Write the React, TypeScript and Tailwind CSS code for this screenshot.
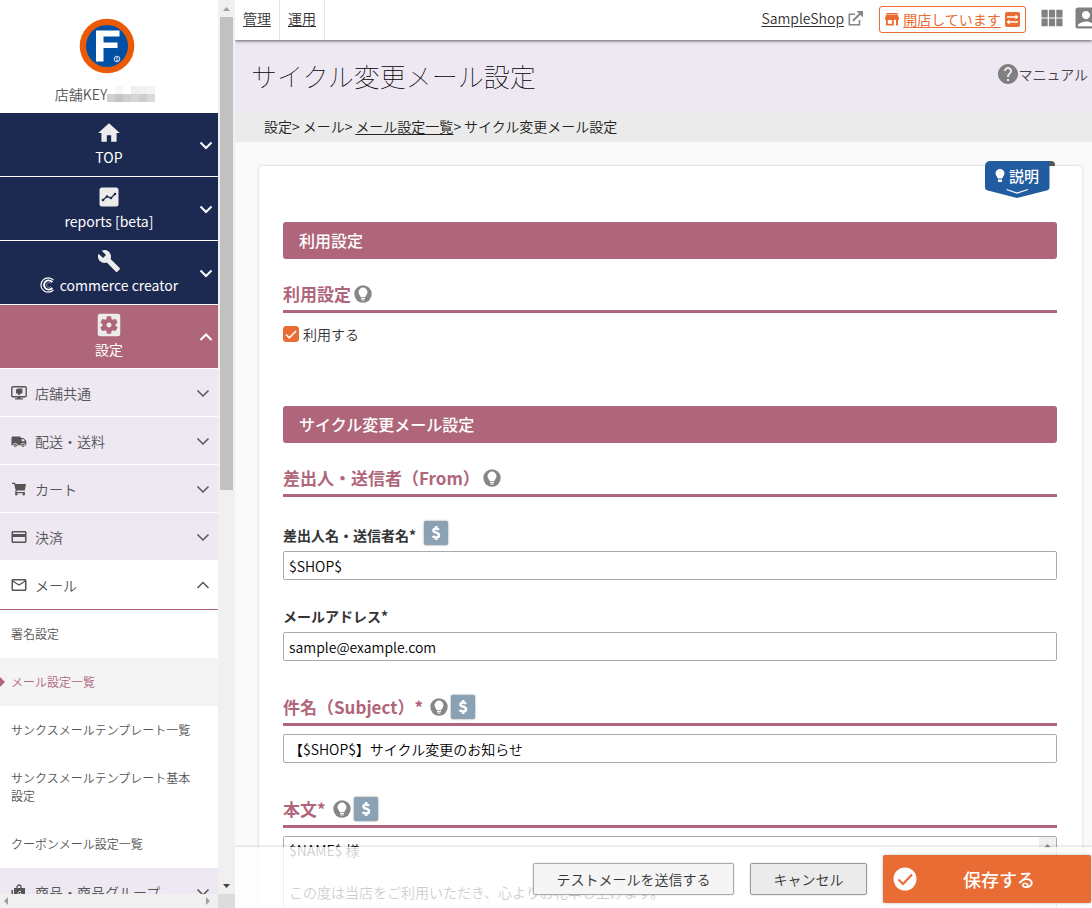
import React from "react";
import {
  MdAccountBox,
  MdBuild,
  MdCreditCard,
  MdHelp,
  MdHome,
  MdMailOutline,
  MdSettingsApplications,
  MdViewModule,
} from "react-icons/md";

function Chevron({ up = false, bold = false }: { up?: boolean; bold?: boolean }) {
  return (
    <svg viewBox="0 0 14 14" className="h-3.5 w-3.5" fill="none" stroke="currentColor" strokeWidth={bold ? 2 : 1.5} aria-hidden="true">
      <path d={up ? "M1.5 10 7 4.5 12.5 10" : "M1.5 4.5 7 10l5.500-5.500"} />
    </svg>
  );
}

function ReportIcon() {
  return (
    <svg viewBox="0 0 20 20" className="h-5 w-5" aria-hidden="true">
      <rect x="0.500" y="0.500" width="19" height="19" rx="2.500" fill="#ececec" />
      <path d="M4 13 8 9.500 12 11 16 7" fill="none" stroke="#1c2951" strokeWidth="1.200" />
      <g fill="#1c2951">
        <circle cx="4" cy="13" r="1.300" />
        <circle cx="8" cy="9.500" r="1.300" />
        <circle cx="12" cy="11" r="1.300" />
        <circle cx="16" cy="7" r="1.300" />
      </g>
    </svg>
  );
}

function CreatorMark() {
  return (
    <svg viewBox="0 0 16 16" className="h-4 w-4" fill="none" stroke="#fff" aria-hidden="true">
      <path d="M13.500 3.200A7.200 7.200 0 1 0 13.500 12.800" strokeWidth="1.200" />
      <path d="M12.300 5.200A4.600 4.600 0 1 0 12.300 10.800" strokeWidth="1.900" />
      <path d="M11 6.800A2.400 2.400 0 1 0 11 9.200" strokeWidth="0.700" opacity="0.600" />
    </svg>
  );
}

function MonitorIcon() {
  return (
    <svg viewBox="0 0 16 16" className="h-4 w-4" aria-hidden="true">
      <rect x="0.800" y="1.700" width="14.400" height="10" rx="1" fill="none" stroke="currentColor" strokeWidth="1.400" />
      <path d="M6.500 11.700h3V13.200H12V14.600H4V13.200h2.500zM5 4.500 7.200 3.600h4.200v5H9.800L8.400 10H7V8.400H5z" fill="currentColor" />
    </svg>
  );
}

function TruckIcon() {
  return (
    <svg viewBox="0 0 16 16" className="h-4 w-4" aria-hidden="true">
      <path d="M1.500 3.500H9a.8.8 0 0 1 .8.800V5h2.700L15.300 8v4.200H.5V4.500a1 1 0 0 1 1-1z" fill="currentColor" />
      <path d="M10.800 6.100v2.100h3.200l-1.900-2.100z" fill="#eee8f3" />
      <g fill="currentColor" stroke="#eee8f3" strokeWidth="0.800">
        <circle cx="4.300" cy="12.300" r="2" />
        <circle cx="12" cy="12.300" r="2" />
      </g>
      <g fill="#eee8f3">
        <circle cx="4.300" cy="12.300" r="0.600" />
        <circle cx="12" cy="12.300" r="0.600" />
      </g>
    </svg>
  );
}

function CartIcon() {
  return (
    <svg viewBox="0 0 16 16" className="h-4 w-4" fill="currentColor" aria-hidden="true">
      <path d="M1 1.800h3L4.600 3H15l-1.200 6.500H5.800L5.500 11H14v1.200H4L4.600 9.300 3.200 3H1z" />
      <circle cx="5.300" cy="13.300" r="1.200" />
      <circle cx="12.800" cy="13.300" r="1.200" />
    </svg>
  );
}

function BagIcon() {
  return (
    <svg viewBox="0 0 16 16" className="h-4 w-4" aria-hidden="true">
      <path d="M6 4V3a2 2 0 0 1 4 0v1" fill="none" stroke="currentColor" strokeWidth="1.300" />
      <path d="M3 4h11v11H3zM.5 6H2v9H.5z" fill="currentColor" />
      <path d="M10 7.500a2 2 0 1 0 .2 3.500V9.500H9" fill="none" stroke="#eee8f3" />
    </svg>
  );
}

function ExternalIcon() {
  return (
    <svg viewBox="0 0 15 15" className="h-[15px] w-[15px]" fill="none" stroke="#868686" strokeWidth="1.600" aria-hidden="true">
      <path d="M7 3.200H1.300V13.700H11.500V9" />
      <path d="M5 9.800 12 2.800" strokeWidth="2" />
      <path d="M8.500 0H15V6.500L12.800 4.300 10.700 2.200z" fill="#868686" stroke="none" />
    </svg>
  );
}

function StoreIcon() {
  return (
    <svg viewBox="0 0 14 13" className="h-[13px] w-3.5" fill="#e86c33" aria-hidden="true">
      <path d="M1.300 0h11.400v1.400H1.300z" />
      <path fillRule="evenodd" d="M1.200 1.800h11.600L14 5.300V6.800H13V12.500H11V6.800H8.800V12.500H1V6.800H0V5.300zM2.800 7v3.800h4.200V7z" />
    </svg>
  );
}

function BulbIcon() {
  return (
    <svg viewBox="0 0 18 18" className="h-[18px] w-[18px]" aria-hidden="true">
      <circle cx="9" cy="9" r="8.700" fill="#868686" />
      <path d="M9 2.600A4.500 4.500 0 0 0 4.500 7c0 2.200 1.700 3.300 2.300 5.200h4.400c.6-1.900 2.300-3 2.300-5.200A4.500 4.500 0 0 0 9 2.600z" fill="#fff" />
      <path d="M7 13h4v.9H7zM7.400 14.400h3.200v1H7.400z" fill="#fff" />
    </svg>
  );
}

function SwapIcon() {
  return (
    <svg viewBox="0 0 15 15" className="h-[15px] w-[15px]" aria-hidden="true">
      <rect width="15" height="15" rx="2" fill="#e86c33" />
      <path d="M2 5H11M4 10h9" stroke="#fff" strokeWidth="1.500" />
      <path d="M10.500 2.500 13.500 5 10.500 7.500zM4.500 7.500 1.500 10l3 2.500z" fill="#fff" />
    </svg>
  );
}

function HelpTip() {
  return (
    <button type="button" aria-label="ヘルプ" className="block">
      <BulbIcon />
    </button>
  );
}

function VariableButton() {
  return (
    <button
      type="button"
      aria-label="変数を挿入"
      className="flex h-6 w-6 items-center justify-center rounded-[2px] bg-[#8ba2b5] text-white shadow-[0_0_2px_rgba(0,0,0,0.5)]"
    >
      <svg viewBox="0 0 12 16" className="h-4 w-3" fill="none" stroke="currentColor" strokeWidth="2.500" aria-hidden="true">
        <path d="M8.800 5C8.200 4 7.200 3.500 6.200 3.500c-1.700 0-2.700.8-2.700 1.900 0 2.700 5.500 1.900 5.500 4.800 0 1.400-1.200 2.300-3 2.300-1.400 0-2.600-.5-3.400-1.500M6.200 1v3M6.200 12v3" />
      </svg>
    </button>
  );
}

const mainMenu = [
  { label: "TOP", icon: <MdHome className="h-[26px] w-[26px]" />, active: false },
  { label: "reports [beta]", icon: <ReportIcon />, active: false },
  { label: "commerce creator", icon: <MdBuild className="h-6 w-6" />, active: false, mark: true },
  { label: "設定", icon: <MdSettingsApplications className="h-[30px] w-[30px]" />, active: true },
];

const subMenu = [
  { label: "店舗共通", icon: <MonitorIcon /> },
  { label: "配送・送料", icon: <TruckIcon /> },
  { label: "カート", icon: <CartIcon /> },
  { label: "決済", icon: <MdCreditCard className="h-[18px] w-[18px]" /> },
];

const mailPages = [
  { label: "署名設定", current: false },
  { label: "メール設定一覧", current: true },
  { label: "サンクスメールテンプレート一覧", current: false },
  { label: "サンクスメールテンプレート基本設定", current: false },
  { label: "クーポンメール設定一覧", current: false },
];

function SubItem({ label, icon, open = false }: { label: string; icon: React.ReactNode; open?: boolean }) {
  return (
    <button
      type="button"
      className={
        open
          ? "flex h-[49px] w-full shrink-0 items-center border-b border-[#b0667a] bg-white pr-2 pl-2.5"
          : "flex h-12 w-full shrink-0 items-center border-b border-white bg-[#eee8f3] pr-2 pl-2.5"
      }
    >
      <span className="flex w-[18px] justify-center text-[#555]">{icon}</span>
      <span className="ml-[7px] flex-1 text-left text-sm font-[350] text-[#555]">{label}</span>
      <Chevron up={open} />
    </button>
  );
}

function Sidebar() {
  return (
    <aside className="flex w-[235px] shrink-0 bg-white text-[#555]">
      <div className="flex min-w-0 flex-1 flex-col">
        <div className="flex min-h-0 flex-1 flex-col overflow-hidden">
          <div className="flex h-[113px] shrink-0 flex-col items-center pt-[18px] pr-1">
            <svg viewBox="0 0 56 56" className="h-14 w-14" role="img" aria-label="F">
              <circle cx="28" cy="28" r="27.300" fill="#eb5a05" />
              <circle cx="28" cy="28" r="21" fill="#0250a4" />
              <path d="M17 12.500H40.500V18.500H24.500v6H38.500V30H24.500V43.500H17z" fill="#fff" />
              <circle cx="38" cy="41" r="2.800" fill="none" stroke="#fff" strokeWidth="0.800" />
              <path d="M39.200 40c-.7-.9-2.200-.6-2.100.3.100 1 2 .6 2 1.600 0 .9-1.600 1-2.200.1" fill="none" stroke="#fff" strokeWidth="0.700" />
            </svg>
            <div className="mt-2.5 flex items-center pr-1">
              <span className="text-sm font-[350]">店舗KEY</span>
              <span className="flex h-4 w-12 items-end" aria-hidden="true">
                <span className="h-2 w-2 bg-[#d0d0d0]" />
                <span className="h-4 w-2 border-t-8 border-[#f6f8f8] bg-[#c6c6c6]" />
                <span className="h-2 w-2 bg-[#d0d0d0]" />
                <span className="h-4 w-2 border-t-8 border-[#eeeeee] bg-[#d6d6d6]" />
                <span className="h-4 w-2 border-t-8 border-[#f2f2f2] bg-[#cecece]" />
                <span className="h-4 w-2 border-t-8 border-[#f4f4f4] bg-[#dadada]" />
              </span>
            </div>
          </div>
          {mainMenu.map((item) => (
            <button
              key={item.label}
              type="button"
              className={
                item.active
                  ? "relative flex h-16 w-full shrink-0 flex-col items-center border-b border-white bg-[#b0667a] pt-1.5"
                  : "relative flex h-16 w-full shrink-0 flex-col items-center border-b border-white bg-[#1c2951] pt-1.5"
              }
            >
              <span className="flex h-7 items-center text-[#ececec]">{item.icon}</span>
              <span className="flex items-center gap-1 text-sm leading-5 font-normal text-white">
                {item.mark && <CreatorMark />}
                {item.label}
              </span>
              <span className="absolute top-[25px] right-[5px] text-white">
                <Chevron up={item.active} bold />
              </span>
            </button>
          ))}
          {subMenu.map((item) => (
            <SubItem key={item.label} label={item.label} icon={item.icon} />
          ))}
          <SubItem label="メール" icon={<MdMailOutline className="h-[18px] w-[18px]" />} open />
          <nav className="shrink-0">
            {mailPages.map((page) => (
              <a
                key={page.label}
                href="#"
                className={
                  page.current
                    ? "relative block bg-[#f4f4f4] py-[15px] pr-6 pl-[11px] text-xs leading-[18px] font-[350] text-[#b0667a]"
                    : "block py-[15px] pr-6 pl-[11px] text-xs leading-[18px] font-[350]"
                }
              >
                {page.current && (
                  <svg viewBox="0 0 5 10" className="absolute top-[19px] left-0 h-2.5 w-[5px]" aria-hidden="true">
                    <path d="M0 0 5 5 0 10z" fill="#b0667a" />
                  </svg>
                )}
                {page.label}
              </a>
            ))}
          </nav>
          <SubItem label="商品・商品グループ" icon={<BagIcon />} />
        </div>
        <div className="flex h-3.5 shrink-0 items-center justify-between bg-[#f0f0f0] px-1 text-[#a0a0a0]" aria-hidden="true">
          <svg viewBox="0 0 4 8" className="h-2 w-1"><path d="M4 0v8L0 4z" fill="currentColor" /></svg>
          <svg viewBox="0 0 4 8" className="mr-1 h-2 w-1"><path d="M0 0v8l4-4z" fill="currentColor" /></svg>
        </div>
      </div>
      <div className="flex w-[17px] shrink-0 flex-col items-center bg-[#f0f0f0]" aria-hidden="true">
        <svg viewBox="0 0 17 17" className="h-[17px] w-[17px] shrink-0"><path d="M5 11h7L8.500 7z" fill="#a0a0a0" /></svg>
        <div className="flex w-full flex-1 flex-col items-center">
          <div className="h-[55%] w-[13px] bg-[#c1c1c1]" />
        </div>
        <svg viewBox="0 0 17 17" className="h-[17px] w-[17px] shrink-0"><path d="M5 7h7l-3.500 4z" fill="#444" /></svg>
        <div className="h-3.5 w-full shrink-0 bg-[#dcdcdc]" />
      </div>
    </aside>
  );
}

function TopBar() {
  return (
    <header className="relative flex h-10 shrink-0 items-start bg-white text-sm font-[350] text-[#333] shadow-[0_1px_3px_rgba(0,0,0,0.6)]">
      <a href="#" className="h-full border-r border-[#e4e4e4] px-2 leading-9 underline underline-offset-2">管理</a>
      <a href="#" className="h-full border-r border-[#e4e4e4] px-2 leading-9 underline underline-offset-2">運用</a>
      <div className="flex-1" />
      <a href="#" className="flex h-9 items-center gap-1">
        <span className="underline underline-offset-2">SampleShop</span>
        <ExternalIcon />
      </a>
      <button type="button" className="mt-1.5 ml-4 flex h-[27px] w-[147px] items-center justify-center gap-1 rounded-[3px] border border-[#e86c33] pb-px font-normal text-[#e86c33]">
        <StoreIcon />
        <span className="underline underline-offset-2">開店しています</span>
        <SwapIcon />
      </button>
      <button type="button" aria-label="アプリ一覧" className="mt-1 ml-3 text-[#808080]">
        <MdViewModule className="h-7 w-7" />
      </button>
      <button type="button" aria-label="アカウント" className="mt-1 -mr-2 ml-1.5 text-[#808080]">
        <MdAccountBox className="h-7 w-7" />
      </button>
    </header>
  );
}

function Banner({ children }: { children: React.ReactNode }) {
  return <h2 className="flex h-[37px] items-center rounded-[3px] bg-[#b0667a] px-4 pb-px text-base font-medium text-white">{children}</h2>;
}

function Heading({ id, label, children }: { id?: string; label: string; children: React.ReactNode }) {
  return (
    <div className="flex h-9 items-center gap-[3px] border-b-[3px] border-[#b0667a]">
      <h3 id={id} className="text-[17px] leading-6 font-bold text-[#b0667a]">{label}</h3>
      {children}
    </div>
  );
}

const inputStyle = "block h-[29px] w-full rounded-[2px] border border-[#aaa] bg-white px-[5px] text-sm font-[350] text-black";

const mailBody = `$NAME$ 様

この度は当店をご利用いただき、心よりお礼申し上げます。
`;

function SettingsCard() {
  return (
    <section className="relative mx-6 mt-6 mr-2.5 flex-1 rounded-t-[3px] bg-white pt-14 pr-[25px] pl-6 shadow-[0_0_3px_rgba(0,0,0,0.2)]">
      <button type="button" className="absolute -top-[5px] right-[27px] h-[38px] w-[70px] text-white">
        <svg viewBox="0 0 70 38" className="absolute inset-0 h-full w-full" aria-hidden="true">
          <path d="M58 0h8a4 4 0 0 1 4 4v1H58z" fill="#555" />
          <path d="M5 0H64.500V26.500a3 3 0 0 1-2 2.800L32 37 2 29.300A3 3 0 0 1 0 26.500V5a5 5 0 0 1 5-5z" fill="#205c9f" />
          <path d="M21.500 28.500 32 32l11-3.500" fill="none" stroke="#fff" strokeWidth="1.300" />
          <path d="M15 8a4.500 4.500 0 0 0-4.500 4.500c0 2 1.800 3 2.300 5h4.400c.5-2 2.300-3 2.300-5A4.500 4.500 0 0 0 15 8zM13 18.500h4v2.500h-4z" fill="#fff" />
        </svg>
        <span className="absolute top-[5px] left-6 text-[15px] leading-5 font-medium">説明</span>
      </button>

      <Banner>利用設定</Banner>
      <div className="mt-[18px]">
        <Heading label="利用設定">
          <HelpTip />
        </Heading>
      </div>
      <label className="mt-[9px] flex h-6 w-fit items-center gap-1 text-sm font-[350] text-[#333]">
        <span className="relative flex h-4 w-4">
          <input type="checkbox" defaultChecked className="peer h-4 w-4 appearance-none rounded-[3px] border border-[#e86c33] checked:bg-[#e86c33]" />
          <svg viewBox="0 0 16 16" className="pointer-events-none absolute inset-0 hidden h-4 w-4 peer-checked:block" aria-hidden="true">
            <path d="M3 8.500 6.300 11.800 13 5" fill="none" stroke="#fff" strokeWidth="1.600" />
          </svg>
        </span>
        利用する
      </label>

      <div className="mt-[60px]">
        <Banner>サイクル変更メール設定</Banner>
      </div>
      <div className="mt-[18px]">
        <Heading label="差出人・送信者（From）">
          <HelpTip />
        </Heading>
      </div>
      <div className="mt-6 flex h-6 items-center gap-2">
        <label htmlFor="sender" className="pt-[3px] text-sm font-bold text-[#333]">差出人名・送信者名*</label>
        <VariableButton />
      </div>
      <input id="sender" type="text" defaultValue="$SHOP$" className={`${inputStyle} mt-1.5`} />
      <div className="mt-[22px] flex h-6 items-center">
        <label htmlFor="address" className="pt-[3px] text-sm font-bold text-[#333]">メールアドレス*</label>
      </div>
      <input id="address" type="email" defaultValue="sample@example.com" className={`${inputStyle} mt-1.5`} />
      <div className="mt-[29px]">
        <Heading id="subject-label" label="件名（Subject）*">
          <span className="flex items-center gap-[3px] pl-1">
            <HelpTip />
            <VariableButton />
          </span>
        </Heading>
      </div>
      <input type="text" aria-labelledby="subject-label" defaultValue="【$SHOP$】サイクル変更のお知らせ" className={`${inputStyle} mt-2`} />
      <div className="mt-[29px]">
        <Heading id="body-label" label="本文*">
          <span className="flex items-center gap-[3px] pl-1">
            <HelpTip />
            <VariableButton />
          </span>
        </Heading>
      </div>
      <div className="mt-2 flex rounded-[2px] border border-[#aaa]">
        <textarea
          aria-labelledby="body-label"
          rows={6}
          defaultValue={mailBody}
          className="block min-w-0 flex-1 resize-none overflow-hidden bg-white px-[5px] py-[3px] text-sm leading-[21px] font-[350] text-black"
        />
        <div className="w-[17px] bg-[#f0f0f0]" aria-hidden="true">
          <svg viewBox="0 0 17 17" className="h-[17px] w-[17px]"><path d="M5 11h7L8.500 7z" fill="#888" /></svg>
          <div className="mx-0.5 h-12 bg-[#f0f0f0]" />
        </div>
      </div>
    </section>
  );
}

function ActionBar() {
  return (
    <footer className="absolute inset-x-0 bottom-0 flex h-[61px] items-center justify-end gap-4 bg-white/80 pr-px pb-px shadow-[0_0_3px_rgba(0,0,0,0.25)]">
      <button type="button" className="mt-1 h-8 w-[201px] rounded-[2px] border border-[#aaa] bg-[#f5f5f5] text-sm font-[350] text-[#333] shadow-[0_0_2px_rgba(0,0,0,0.2)]">
        テストメールを送信する
      </button>
      <button type="button" className="mt-1 h-8 w-[117px] rounded-[2px] border border-[#999] bg-[#ebebeb] text-sm font-[350] text-[#333] shadow-[0_0_2px_rgba(0,0,0,0.2)]">
        キャンセル
      </button>
      <button type="button" className="mt-1 flex h-12 w-52 items-center rounded-[2px] bg-[#e86c33] pr-2.5 pl-2.5 text-white shadow-[0_0_3px_rgba(0,0,0,0.3)]">
        <svg viewBox="0 0 24 24" className="h-6 w-6" aria-hidden="true">
          <circle cx="12" cy="12" r="11.500" fill="#fff" />
          <path d="M5.500 12.500 10 17l9-9.500" fill="none" stroke="#e86c33" strokeWidth="2.200" />
        </svg>
        <span className="flex-1 text-center text-lg font-medium">保存する</span>
      </button>
    </footer>
  );
}

export default function App() {
  return (
    <div className="flex h-screen overflow-hidden bg-[#fafafa] font-['Noto_Sans_CJK_JP',sans-serif]">
      <Sidebar />
      <main className="relative flex min-w-0 flex-1 flex-col overflow-hidden">
        <TopBar />
        <div className="flex h-[71px] shrink-0 items-center justify-between bg-[#eee8f3] pr-1 pl-4">
          <h1 className="text-[26px] font-thin text-black">サイクル変更メール設定</h1>
          <a href="#" className="flex items-center pb-1 text-sm font-[350] text-[#444]">
            <MdHelp className="h-6 w-6 text-[#808080]" />
            <span className="-ml-0.5">マニュアル</span>
          </a>
        </div>
        <nav className="flex h-[31px] shrink-0 items-center gap-[3px] bg-[#ebebeb] pb-0.5 pl-[29px] text-sm font-[350] text-[#222]">
          <span>設定&gt;</span>
          <span>メール&gt;</span>
          <span>
            <a href="#" className="underline underline-offset-2">メール設定一覧</a>&gt;
          </span>
          <span>サイクル変更メール設定</span>
        </nav>
        <SettingsCard />
        <ActionBar />
      </main>
    </div>
  );
}
